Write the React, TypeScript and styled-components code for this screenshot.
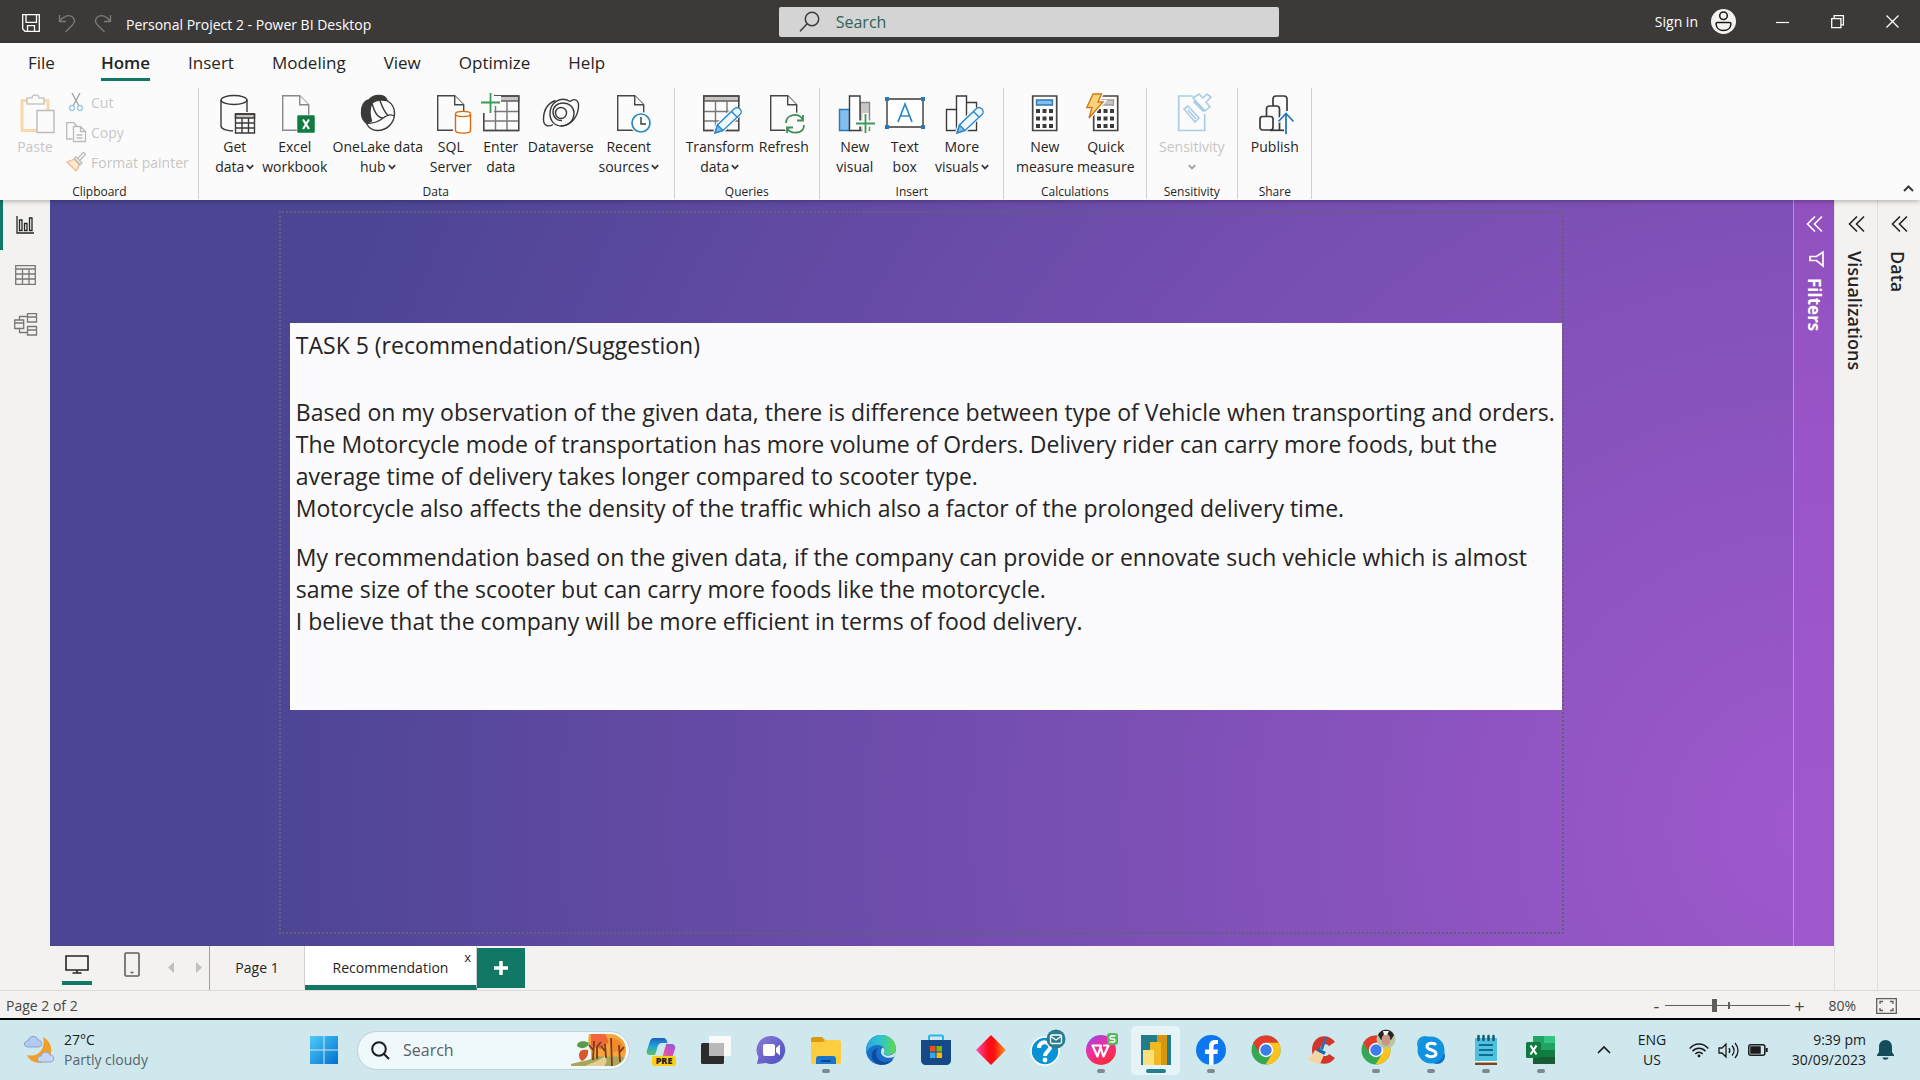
import React from "react";
import styled, { createGlobalStyle, css } from "styled-components";

const ink = "#3b3a39";
const green = "#117865";

const GlobalStyle = createGlobalStyle`
  *, *::before, *::after { box-sizing: border-box; }
  html, body { margin: 0; }
  body {
    font-family: "Open Sans", "Noto Sans", sans-serif;
    color: #252423;
    background: #f3f2f1;
  }
  button, input { font: inherit; color: inherit; }
  button { border: 0; padding: 0; background: none; white-space: nowrap; }
  svg { display: block; overflow: visible; flex: none; }
  p { margin: 0; }
`;

const Shell = styled.div`
  display: flex;
  flex-direction: column;
  height: 100vh;
  overflow: hidden;
`;

/* ---------- Title bar ---------- */
const TitleBar = styled.header`
  display: grid;
  grid-template-columns: 17fr 500px 14fr;
  align-items: center;
  height: 43px;
  flex: none;
  background: #3b3a38;
  color: #fff;
  font-size: 14px;
`;
const TitleLeft = styled.div`
  display: flex;
  align-items: center;
  padding: 2px 0 0 22px;
  gap: 18px;
`;
const TitleText = styled.span`
  padding-top: 4px;
  margin-left: -4px;
  white-space: nowrap;
`;
const TitleSearch = styled.label`
  display: flex;
  align-items: center;
  gap: 14px;
  height: 30px;
  padding-left: 20px;
  border-radius: 2px;
  background: #d4d4d4;
`;
const TitleInput = styled.input`
  flex: 1;
  min-width: 0;
  border: 0;
  outline: 0;
  background: none;
  font-size: 16px;
  &::placeholder { color: #2f6256; opacity: 1; }
`;
const TitleRight = styled.div`
  display: flex;
  justify-content: flex-end;
  align-items: center;
`;
const SignIn = styled.button`
  display: flex;
  align-items: center;
  gap: 13px;
  margin-right: 19px;
`;
const WindowButton = styled.button`
  display: grid;
  place-items: center;
  width: 55px;
  height: 43px;
`;

/* ---------- Ribbon ---------- */
const Ribbon = styled.section`
  display: flex;
  flex-direction: column;
  height: 157px;
  flex: none;
  background: #fbfbfb;
  box-shadow: 0 1px 5px rgba(0, 0, 0, 0.3);
  z-index: 1;
`;
const RibbonTabs = styled.nav`
  display: flex;
  gap: 38px;
  padding: 6px 0 0 28px;
`;
const RibbonTab = styled.button<{ $active?: boolean }>`
  height: 32px;
  margin-left: ${(p) => (p.$active ? 8 : 0)}px;
  padding-bottom: 2px;
  font-size: 17px;
  line-height: 26px;
  border-bottom: 3px solid ${(p) => (p.$active ? green : "transparent")};
  font-weight: ${(p) => (p.$active ? 600 : 400)};
`;
const RibbonBody = styled.div`
  display: flex;
  flex: 1;
  padding-top: 7px;
`;
const Group = styled.section<{ $pad: string }>`
  display: flex;
  flex-direction: column;
  justify-content: space-between;
  height: 111px;
  padding: ${(p) => p.$pad};
  border-right: 1px solid #d2d0ce;
`;
const GroupRow = styled.div`
  display: flex;
`;
const GroupName = styled.span`
  font-size: 12px;
  line-height: 15px;
  text-align: center;
`;
const Tool = styled.button<{ $w: number }>`
  display: flex;
  flex-direction: column;
  align-items: center;
  justify-content: flex-start;
  width: ${(p) => p.$w}px;
  padding-top: 4px;
  font-size: 14px;
  line-height: 20px;
  &:disabled { color: #c8c6c4; }
`;
const ToolText = styled.span`
  display: flex;
  flex-direction: column;
  align-items: center;
  padding-top: 3px;
`;
const ToolLine = styled.span`
  display: flex;
  align-items: center;
  gap: 2px;
`;
const ChevronSlot = styled.span`
  display: flex;
  align-items: center;
  height: 20px;
`;
const SmallTools = styled.div`
  display: flex;
  flex-direction: column;
  gap: 2px;
  padding-left: 6px;
`;
const SmallTool = styled.button`
  display: flex;
  align-items: center;
  gap: 5px;
  height: 28px;
  font-size: 14px;
  &:disabled { color: #c8c6c4; }
`;
const CollapseRibbon = styled.button`
  align-self: flex-end;
  margin-left: auto;
  padding: 8px 6px;
`;

/* ---------- Work area ---------- */
const Work = styled.main`
  display: flex;
  flex: 1;
  min-height: 0;
`;
const Stage = styled.div`
  display: flex;
  flex-direction: column;
  flex: 1;
  min-width: 0;
`;
const StageTop = styled.div`
  display: flex;
  flex: 1;
  min-height: 0;
`;
const ViewRail = styled.nav`
  display: flex;
  flex-direction: column;
  width: 50px;
  flex: none;
`;
const ViewButton = styled.button<{ $active?: boolean }>`
  display: grid;
  place-items: center;
  height: 50px;
  padding-right: 3px;
  padding-bottom: 1px;
  border-left: 3px solid ${(p) => (p.$active ? green : "transparent")};
`;
const Backdrop = styled.div`
  display: flex;
  flex: 1;
  min-width: 0;
  background: radial-gradient(ellipse 88% 208% at 99% 84%, #a058ce 0%, #4c4594 100%);
`;
const Canvas = styled.div`
  display: flex;
  justify-content: center;
  align-items: flex-start;
  flex: 1;
  min-width: 0;
  padding-top: 11px;
`;
const ReportPage = styled.article`
  height: calc(100% - 12px);
  aspect-ratio: 16 / 9;
  padding: 110px 0 0 9px;
  border: 2px dotted #625f78;
`;
const TextVisual = styled.section`
  height: 387px;
  padding: 6px;
  background: #fbfafd;
  font-size: 23px;
  line-height: 32px;
  color: #252423;
  white-space: nowrap;
`;
const Heading = styled.p`
  padding-bottom: 35px;
`;
const Paragraph = styled.p`
  padding-bottom: 17px;
`;
const sidePane = css`
  display: flex;
  flex-direction: column;
  align-items: center;
  flex: none;
  padding-top: 16px;
`;
const FiltersPane = styled.aside`
  ${sidePane}
  width: 41px;
  border-left: 1px solid #b394d6;
  background: linear-gradient(#9051bd, #9b55cb 40%, #a058ce);
  color: #fff;
`;
const SidePane = styled.aside`
  ${sidePane}
  width: 43px;
  border-left: 1px solid #e1dfdd;
`;
const PaneTitle = styled.span<{ $strong?: boolean }>`
  writing-mode: vertical-rl;
  padding-top: ${(p) => (p.$strong ? 11 : 19)}px;
  padding-right: ${(p) => (p.$strong ? 0 : 3)}px;
  font-size: ${(p) => (p.$strong ? 17 : 18)}px;
  line-height: 22px;
  font-weight: ${(p) => (p.$strong ? 700 : 600)};
`;
const FilterGlyph = styled.span`
  padding: 19px 0 0 4px;
`;

/* ---------- Page tabs and status ---------- */
const PageBar = styled.nav`
  display: flex;
  height: 44px;
  flex: none;
  padding-left: 50px;
`;
const LayoutTools = styled.div`
  display: flex;
  align-items: flex-start;
  width: 160px;
  padding-left: 12px;
  border-right: 1px solid #a19f9d;
`;
const LayoutButton = styled.button<{ $active?: boolean }>`
  display: grid;
  place-items: center;
  width: 30px;
  height: 39px;
  margin-right: 25px;
  padding-top: 2px;
  border-bottom: 4px solid ${(p) => (p.$active ? green : "transparent")};
`;
const PageArrows = styled.div`
  display: flex;
  gap: 22px;
  margin-left: -4px;
`;
const PageArrow = styled.button`
  display: grid;
  place-items: center;
  height: 43px;
`;
const PageTab = styled.button<{ $active?: boolean }>`
  display: grid;
  grid-template-columns: 1fr auto 1fr;
  align-items: center;
  padding: 0 5px;
  width: ${(p) => (p.$active ? 172 : 95)}px;
  font-size: 14px;
  border-right: 1px solid #d2d0ce;
  border-bottom: 5px solid ${(p) => (p.$active ? green : "transparent")};
  background: ${(p) => (p.$active ? "#fff" : "none")};
`;
const TabLabel = styled.span`
  grid-column: 2;
  padding-top: 4px;
`;
const TabClose = styled.span`
  justify-self: end;
  align-self: start;
  padding-top: 2px;
  font-size: 13px;
`;
const AddPage = styled.button`
  display: grid;
  place-items: center;
  width: 48px;
  height: 40px;
  margin-top: 2px;
  background: ${green};
`;
const StatusBar = styled.footer`
  display: flex;
  align-items: center;
  height: 30px;
  flex: none;
  padding: 2px 23px 0 6px;
  border-top: 1px solid #dddbd9;
  border-bottom: 2px solid #000;
  font-size: 14px;
  color: #484644;
`;
const ZoomBox = styled.div`
  display: flex;
  align-items: center;
  margin-left: auto;
`;
const ZoomStep = styled.button`
  width: 18px;
  font-size: 18px;
  line-height: 20px;
`;
const ZoomTrack = styled.input`
  width: 125px;
  height: 20px;
  margin: 0;
  appearance: none;
  background:
    linear-gradient(#605e5c, #605e5c) 63px 50% / 2px 7px no-repeat,
    linear-gradient(#605e5c, #605e5c) 0 50% / 100% 1px no-repeat;
  &::-webkit-slider-thumb {
    appearance: none;
    width: 5px;
    height: 13px;
    background: #605e5c;
  }
`;
const ZoomValue = styled.span`
  padding: 0 20px;
`;

/* ---------- Taskbar ---------- */
const Taskbar = styled.footer`
  display: flex;
  align-items: center;
  height: 60px;
  flex: none;
  background: #cfe8ee;
  color: #1b1b1b;
`;
const Weather = styled.button`
  display: flex;
  align-items: center;
  gap: 9px;
  width: 302px;
  padding-left: 24px;
  font-size: 14px;
  line-height: 20px;
  text-align: left;
`;
const Muted = styled.span`
  display: block;
  color: #566468;
`;
const StartButton = styled.button`
  display: grid;
  place-items: center;
  width: 44px;
  height: 48px;
`;
const TaskSearch = styled.label`
  display: flex;
  align-items: center;
  width: 273px;
  height: 39px;
  margin: 0 3px 0 11px;
  padding: 0 2px 0 13px;
  gap: 11px;
  border-radius: 20px;
  border: 1px solid #bcd3d9;
  background: #eff8fb;
`;
const TaskInput = styled.input`
  flex: 1;
  min-width: 0;
  border: 0;
  outline: 0;
  background: none;
  font-size: 16px;
  &::placeholder { color: #5a5f61; opacity: 1; }
`;
const AppButton = styled.button<{ $current?: boolean }>`
  display: flex;
  flex-direction: column;
  align-items: center;
  justify-content: flex-end;
  width: 49px;
  height: 49px;
  margin: 0 3px;
  padding-bottom: 2px;
  border-radius: 5px;
  background: ${(p) => (p.$current ? "#e6f4f7" : "none")};
`;
const Running = styled.span<{ $state: number }>`
  width: ${(p) => (p.$state === 2 ? 20 : 8)}px;
  height: 4px;
  margin-top: 3px;
  border-radius: 2px;
  background: ${(p) => (p.$state === 2 ? "#23808f" : p.$state ? "#7d898c" : "transparent")};
`;
const Tray = styled.div`
  display: flex;
  align-items: center;
  margin-left: auto;
  padding-right: 26px;
  font-size: 14px;
  line-height: 20px;
`;
const TrayLanguage = styled.button`
  width: 44px;
  margin: 0 15px 0 19px;
  text-align: center;
`;
const TrayIcons = styled.button`
  display: flex;
  align-items: center;
  gap: 9px;
`;
const Clock = styled.button`
  width: 98px;
  margin-right: 11px;
  text-align: right;
`;

/* ---------- Ribbon drawings ---------- */
const Icon = ({ children }: { children: React.ReactNode }) => (
  <svg width="40" height="42" viewBox="0 0 40 42" fill="none" stroke={ink} strokeWidth="1.4" aria-hidden="true">
    {children}
  </svg>
);
const Sheet = ({ x = 6, color = "#605e5c" }: { x?: number; color?: string }) => (
  <g transform={`translate(${x} 0)`} stroke={color} fill="#fbfbfb">
    <path d="M.7 3.7h17l9 9v25.600H.7z" />
    <path d="M17.700 3.700v9h9" />
  </g>
);
const Pencil = () => (
  <g stroke="#2b88c8">
    <path d="M33.500 17.500l-16 15.500-2.500 8 8-2.500L39 22.500z" stroke="#fbfbfb" strokeWidth="4" />
    <path d="M34 17c2-2 4.500-1.500 6 0s1.500 4 0 5.500L23 38.500l-8 2.500 2.500-8z" fill="#eef7fd" />
    <path d="M17.500 33l5.500 5.500-8 2.500z" fill="#83beec" />
    <path d="M31.500 19.500l5.500 5.500" />
  </g>
);
const Grid = ({ x = 2 }: { x?: number }) => (
  <g transform={`translate(${x} 0)`}>
    <path d="M.7 4h35v5h-35z" fill="#c8c6c4" stroke="#605e5c" />
    <path d="M.7 4h35v34.500h-35zM.7 19.500h35M.7 29h35M12.500 9v29.500M24 9v29.500" stroke="#797775" />
    <path d="M.7 4h35v34.500h-35z" stroke="#484644" />
  </g>
);
const CalcKeys = () => (
  <g fill={ink} stroke="none">
    {[17, 24.5, 32].map((y) => [11, 17.5, 24].map((x) => <rect key={`${x}-${y}`} x={x} y={y} width="4" height="4" />))}
  </g>
);
const Chevron = ({ color = ink }: { color?: string }) => (
  <svg width="8" height="6" viewBox="0 0 8 6" fill="none" stroke={color} strokeWidth="1.8" aria-hidden="true">
    <path d="M.8 1.200L4 4.400l3.200-3.200" />
  </svg>
);

const icons: Record<string, React.ReactNode> = {
  paste: (
    <Icon>
      <path d="M7 8.500h26v30H7z" stroke="#f8d9ae" strokeWidth="3" />
      <path d="M12 9V6h5c0-4 7-4 7 0h5v6H12z" fill="#fbfbfb" stroke="#c8c6c4" />
      <path d="M22 18.500h17v22H22z" fill="#fbfbfb" stroke="#bdbbb9" />
    </Icon>
  ),
  get: (
    <Icon>
      <path d="M6 8v26c0 3 6 5 13 5s13-2 13-5V8" />
      <ellipse cx="19" cy="8" rx="13" ry="4.5" />
      <path d="M18 20h24v23H18z" fill="#fbfbfb" stroke="none" />
      <path d="M20.500 22h19v4h-19z" fill="#c8c6c4" />
      <path d="M20.500 22h19v19h-19zM20.500 31h19M20.500 36h19M27 26v15M33.500 26v15" />
    </Icon>
  ),
  excel: (
    <Icon>
      <Sheet x={7} color="#8a8886" />
      <rect x="22" y="23" width="18" height="18" rx="1.5" fill="#107c41" stroke="#fbfbfb" strokeWidth=".5" />
      <path d="M28 27.500l6 9.500M34 27.500L28 37" stroke="#fff" strokeWidth="2.2" />
    </Icon>
  ),
  onelake: (
    <Icon>
      <path d="M11 8c2-3 6-4.500 10-4.500 4 0 7 2 8 5-5-1-11-1-16 3z" fill={ink} />
      <path d="M11 8c-5 1-8 6-7.500 13 0 4 2 8 5 10 1-1 4-1 5-2-2-6-2-12 0-17z" fill={ink} />
      <path d="M29 8.500c5 3 8 8 7.500 14-.5 9-8 16-17 16-5 0-9-3-11-7 6 0 11-1 16-5 4-3 9-5 12-2M14 11c2 8 6 15 11 15M22 8.500c2 6 5 12 8 15" />
    </Icon>
  ),
  sql: (
    <Icon>
      <Sheet x={6} color="#484644" />
      <path d="M22 19h19v23H22z" fill="#fbfbfb" stroke="none" />
      <path d="M24.500 22v16.500c0 3.500 15 3.500 15 0V22" fill="#fff" stroke="#d8690e" />
      <ellipse cx="32" cy="22" rx="7.5" ry="2.6" fill="#fff" stroke="#d8690e" />
    </Icon>
  ),
  enter: (
    <Icon>
      <Grid />
      <path d="M0 0h13v4h7v10h-7v7H0z" fill="#fbfbfb" stroke="none" />
      <path d="M9.500 1v20M0 10.500h19" stroke="#3a9a56" strokeWidth="1.8" />
    </Icon>
  ),
  dataverse: (
    <Icon>
      <circle cx="20" cy="21" r="5.5" />
      <path d="M29 9.500C20 4 9 10 9 22c0 7 5 12 11 12 8 0 13-6 13-13 0-6-5-10-10.500-10C16 11 12 15 12 20c0 6 5 9 9 8.500" />
      <path d="M29 9.500c5-4 9-1 8.500 5-.5 10-7 19-17.500 19.500M12 32.500c-5 3-9.500 1-9.500-5 0-9 4-16 12-19" />
    </Icon>
  ),
  recent: (
    <Icon>
      <Sheet x={8} color="#484644" />
      <circle cx="32" cy="31" r="11" fill="#fbfbfb" stroke="none" />
      <circle cx="32" cy="31" r="9" fill="#fff" stroke="#2b88c8" strokeWidth="1.7" />
      <path d="M32 25v7h5" />
    </Icon>
  ),
  transform: (
    <Icon>
      <Grid x={3} />
      <Pencil />
    </Icon>
  ),
  refresh: (
    <Icon>
      <Sheet x={6} color="#484644" />
      <circle cx="31" cy="32" r="11.5" fill="#fbfbfb" stroke="none" />
      <path d="M22 31c0-9 13-11 17-3M39 23v5.500h-6M40 33c0 9-13 10-17 3M23 41v-5.500h6" stroke="#3f8f55" strokeWidth="1.8" />
    </Icon>
  ),
  visual: (
    <Icon>
      <path d="M4.500 17.500h10v21h-10z" fill="#83beec" stroke="#2b78b8" />
      <path d="M25 10.500h9.500v28H25z" fill="#c8c6c4" stroke="#8a8886" />
      <path d="M14.500 4h10.500v34.500H14.500z" fill="#fff" />
      <path d="M27.500 21h6v7.500h8v6h-8v8h-6v-8h-7v-6h7z" fill="#fbfbfb" stroke="none" />
      <path d="M30.500 22v19M21 31.500h19" stroke="#3a9a56" strokeWidth="1.8" />
    </Icon>
  ),
  text: (
    <Icon>
      <path d="M2 7h36v28H2z" fill="#fff" />
      <path d="M13 30l7-18 7 18M15.500 24h9" stroke="#2b88c8" strokeWidth="1.7" />
      <g fill="#2b78b8" stroke="none">
        <path d="M0 5h4v4H0zM36 5h4v4h-4zM0 33h4v4H0zM36 33h4v4h-4z" />
      </g>
    </Icon>
  ),
  more: (
    <Icon>
      <path d="M4.500 17.500h10v21h-10zM14.500 4h10v34.500h-10zM24.500 10.500h10v28h-10z" fill="#fff" />
      <Pencil />
    </Icon>
  ),
  measure: (
    <Icon>
      <path d="M7.700 4h24v34.500h-24z" fill="#fff" stroke="#484644" strokeWidth="1.7" />
      <path d="M11.500 8h16v5h-16z" fill="#83beec" stroke="#2b78b8" />
      <CalcKeys />
    </Icon>
  ),
  quick: (
    <Icon>
      <path d="M7.700 4h24v34.500h-24z" fill="#fff" stroke="#484644" strokeWidth="1.7" />
      <path d="M11.500 8h16v5h-16z" fill="#c8c6c4" stroke="#a19f9d" />
      <CalcKeys />
      <path d="M7 2h8.500l-3.500 8h5L3 26l3-10.500H.8z" stroke="#fbfbfb" strokeWidth="4" />
      <path d="M7 2h8.500l-3.500 8h5L3 26l3-10.500H.8z" fill="#fdd37a" stroke="#cf7a17" />
    </Icon>
  ),
  sensitivity: (
    <Icon>
      <path d="M6.700 4h26v34.500h-26z" stroke="#a9cde4" strokeWidth="1.7" />
      <path d="M19 0h23v22H30z" fill="#fbfbfb" stroke="none" />
      <g stroke="#a9cde4" strokeWidth="1.6">
        <path d="M21 6l12 13 5-4-4-5 5-5-4-3-4 4-4-4z" />
        <path d="M22 9l10 10" strokeWidth="3" />
        <path d="M12 17l4-3 11 12-4 4zM16 18l8 9" />
      </g>
    </Icon>
  ),
  publish: (
    <Icon>
      <g strokeWidth="1.7">
        <path d="M18 14V7c0-2 1-3 3-3h8c2 0 3 1 3 3v12M11.500 24v-7c0-2 1-3 3-3h7c2 0 3 1 3 3v21" />
        <rect x="5" y="24.5" width="13" height="13.5" rx="2.5" />
        <path d="M15 38.300h14" />
      </g>
      <path d="M31 42V22M23 29.500l8-8 8 8" stroke="#fbfbfb" strokeWidth="4" />
      <path d="M31 42V22M23.500 29.500l7.500-8 7.500 8" stroke="#2b78b8" strokeWidth="1.8" />
    </Icon>
  ),
};

type ToolSpec = { icon: string; w: number; lines: string[]; menu?: boolean; off?: boolean };
const groups: { name: string; pad: string; tools: ToolSpec[] }[] = [
  {
    name: "Data",
    pad: "0 11px 0 10px",
    tools: [
      { icon: "get", w: 52, lines: ["Get", "data"], menu: true },
      { icon: "excel", w: 68, lines: ["Excel", "workbook"] },
      { icon: "onelake", w: 98, lines: ["OneLake data", "hub"], menu: true },
      { icon: "sql", w: 48, lines: ["SQL", "Server"] },
      { icon: "enter", w: 52, lines: ["Enter", "data"] },
      { icon: "dataverse", w: 68, lines: ["Dataverse"] },
      { icon: "recent", w: 68, lines: ["Recent", "sources"], menu: true },
    ],
  },
  {
    name: "Queries",
    pad: "0 8px",
    tools: [
      { icon: "transform", w: 74, lines: ["Transform", "data"], menu: true },
      { icon: "refresh", w: 54, lines: ["Refresh"] },
    ],
  },
  {
    name: "Insert",
    pad: "0 9px 0 10px",
    tools: [
      { icon: "visual", w: 50, lines: ["New", "visual"] },
      { icon: "text", w: 50, lines: ["Text", "box"] },
      { icon: "more", w: 64, lines: ["More", "visuals"], menu: true },
    ],
  },
  {
    name: "Calculations",
    pad: "0 10px",
    tools: [
      { icon: "measure", w: 62, lines: ["New", "measure"] },
      { icon: "quick", w: 60, lines: ["Quick", "measure"] },
    ],
  },
  {
    name: "Sensitivity",
    pad: "0 9px",
    tools: [{ icon: "sensitivity", w: 72, lines: ["Sensitivity", ""], menu: true, off: true }],
  },
  { name: "Share", pad: "0 6px 0 7px", tools: [{ icon: "publish", w: 60, lines: ["Publish"] }] },
];

const RibbonTool = ({ icon, w, lines, menu, off }: ToolSpec) => (
  <Tool $w={w} disabled={off}>
    {icons[icon]}
    <ToolText>
      {lines.map((line, i) => (
        <ToolLine key={i}>
          {line}
          {menu && i === lines.length - 1 && (
            <ChevronSlot>
              <Chevron color={off ? "#a19f9d" : ink} />
            </ChevronSlot>
          )}
        </ToolLine>
      ))}
    </ToolText>
  </Tool>
);

const DoubleChevron = () => (
  <svg width="17" height="16" viewBox="0 0 17 16" fill="none" stroke="currentColor" strokeWidth="1.6" aria-hidden="true">
    <path d="M9 .5L1.500 8 9 15.500M16 .5L8.500 8l7.500 7.500" />
  </svg>
);

/* ---------- Taskbar drawings ---------- */
const AppIcon = ({ children }: { children: React.ReactNode }) => (
  <svg width="32" height="32" viewBox="0 0 32 32" aria-hidden="true">
    {children}
  </svg>
);
const ChromeMark = () => (
  <g>
    <circle cx="16" cy="16" r="14.5" fill="#34a853" />
    <path d="M3.400 8.800A14.500 14.500 0 0 1 28.600 8.800H16L9.700 19.600z" fill="#e33b2e" />
    <path d="M28.600 8.800A14.500 14.500 0 0 1 15.500 30.500L22.300 19.600 16 8.800z" fill="#fcc31e" />
    <circle cx="16" cy="16" r="7.2" fill="#fff" />
    <circle cx="16" cy="16" r="5.7" fill="#3b7ded" />
  </g>
);

const apps: { name: string; run: number; art: React.ReactNode }[] = [
  {
    name: "Copilot",
    run: 0,
    art: (
      <>
        <defs>
          <linearGradient id="cpA" x1="0" y1="0" x2="0" y2="1"><stop stopColor="#1a5fc4" /><stop offset=".5" stopColor="#22a6d8" /><stop offset="1" stopColor="#67c34c" /></linearGradient>
          <linearGradient id="cpB" x1="1" y1="0" x2="0" y2="1"><stop stopColor="#8a5be8" /><stop offset=".5" stopColor="#d94fb4" /><stop offset="1" stopColor="#ff8a4a" /></linearGradient>
        </defs>
        <path d="M9 4h9c3 0 4 2 4.500 5H17c-3 0-4 2-5 6l-2 6H5c-3 0-4-2-3-5l3-9c.7-2 2-3 4-3z" fill="url(#cpA)" />
        <path d="M21 10h5c3 0 5 2 4 5l-2 6c-1 4-3 5-6 5h-8c3 0 3-2 4-5l2-7c.5-2 1-3 1-4z" fill="url(#cpB)" />
        <rect x="7" y="22" width="24" height="10" rx="2" fill="#fbcf14" />
        <text x="19" y="30" textAnchor="middle" fontSize="9" fontWeight="800" fill="#222">PRE</text>
      </>
    ),
  },
  {
    name: "Task view",
    run: 0,
    art: (
      <>
        <rect x="1" y="9" width="23" height="21" rx="1.5" fill="#2c2c2c" />
        <rect x="9" y="2" width="22" height="20" rx="1.5" fill="#fafafa" />
        <path d="M9 9h15v13H9z" fill="#b9b9b9" />
      </>
    ),
  },
  {
    name: "Chat",
    run: 0,
    art: (
      <>
        <defs><linearGradient id="chat" x1="0" y1="0" x2="1" y2="1"><stop stopColor="#8c7ad8" /><stop offset="1" stopColor="#4b4fc0" /></linearGradient></defs>
        <path d="M16 2a14 14 0 1 1-5 27L2 30l1.500-7A14 14 0 0 1 16 2z" fill="url(#chat)" />
        <rect x="8" y="10" width="12" height="12" rx="2" fill="#fff" />
        <path d="M21 14l4-3.500v11L21 18z" fill="#fff" />
      </>
    ),
  },
  {
    name: "File Explorer",
    run: 1,
    art: (
      <>
        <path d="M1 5c0-1 1-2 2-2h9l3 3v6H1z" fill="#d99a12" />
        <path d="M1 8h12l2-2h14c1 0 2 1 2 2v20c0 1-1 2-2 2H3c-1 0-2-1-2-2z" fill="#fcce3f" />
        <path d="M6 30v-5c0-2 1-3 3-3h14c2 0 3 1 3 3v5z" fill="#1976cc" />
        <rect x="11" y="26" width="10" height="2" rx="1" fill="#0a4a8c" />
      </>
    ),
  },
  {
    name: "Edge",
    run: 0,
    art: (
      <>
        <defs><linearGradient id="edge" x1="0" x2="1"><stop stopColor="#28a8e4" /><stop offset=".5" stopColor="#2fc6c8" /><stop offset="1" stopColor="#62d84c" /></linearGradient></defs>
        <circle cx="16" cy="16" r="15" fill="#1a6fc6" />
        <path d="M1.500 14C3 5 9 1 16 1c9 0 15 6 15 13 0 5-4 7-8 7-3 0-5-1-4-3 2-3-1-7-6-7-6 0-10 3-11.500 8z" fill="url(#edge)" />
        <path d="M13 14c-4 4-2 13 6 14 4 .5 8-1 10-4-4 8-14 8-18 5-7-5-5-13 2-15z" fill="#0f4a9c" />
        <path d="M19 18c-1 2 1 3.500 4 3.500 3 0 6-1 8-5 0 3-1 5-2 6.500-4 1.500-9 1-12-2-1.500-2-1.500-5 .5-7.500 2 1 2.500 3 1.500 4.500z" fill="#cfe8ee" />
      </>
    ),
  },
  {
    name: "Store",
    run: 0,
    art: (
      <>
        <path d="M9 8V3c0-1 .5-1.500 1.500-1.500h11C22.500 1.500 23 2 23 3v5" fill="none" stroke="#29b6f0" strokeWidth="2" />
        <path d="M1 6h30v20c0 3-2 5-5 5H6c-3 0-5-2-5-5z" fill="#154a86" />
        <path d="M10 12h5.500v5.500H10z" fill="#f25022" />
        <path d="M16.500 12H22v5.500h-5.500z" fill="#7fba00" />
        <path d="M10 18.500h5.500V24H10z" fill="#2fa8f0" />
        <path d="M16.500 18.500H22V24h-5.500z" fill="#ffb900" />
      </>
    ),
  },
  {
    name: "Diamond",
    run: 0,
    art: (
      <>
        <defs><linearGradient id="dia"><stop stopColor="#ff4fb0" /><stop offset=".4" stopColor="#f80d1c" /><stop offset=".6" stopColor="#fa1010" /><stop offset="1" stopColor="#ff9a1c" /></linearGradient></defs>
        <path d="M16 1l15 15-15 15L1 16z" fill="url(#dia)" />
      </>
    ),
  },
  {
    name: "Help and mail",
    run: 0,
    art: (
      <>
        <circle cx="15" cy="17" r="14" fill="#0a93d4" stroke="#fff" strokeWidth="1.5" />
        <path d="M9 14c0-8 12-7 11 0-.5 3-5 4-5 8" fill="none" stroke="#fff" strokeWidth="4" />
        <circle cx="15" cy="26" r="2.4" fill="#fff" />
        <circle cx="26" cy="5" r="9.5" fill="#2a7d90" />
        <rect x="20.5" y="1" width="11" height="8.5" rx="1.5" fill="none" stroke="#fff" strokeWidth="1.3" />
        <path d="M21 2.500l5 3.500 5-3.500" fill="none" stroke="#fff" strokeWidth="1.3" />
      </>
    ),
  },
  {
    name: "WPS Office",
    run: 1,
    art: (
      <>
        <defs><linearGradient id="wps" x1="0" y1="0" x2=".6" y2="1"><stop stopColor="#8a4cf8" /><stop offset=".5" stopColor="#f02f9c" /><stop offset="1" stopColor="#fb2a3c" /></linearGradient></defs>
        <circle cx="16" cy="16" r="15" fill="url(#wps)" />
        <path d="M7.500 11.500h8.500l-3.500 11zM15.500 13.500l3 9 5-11H18" fill="none" stroke="#fff" strokeWidth="2.2" strokeLinejoin="round" />
        <rect x="22" y="-1" width="11" height="12" rx="3" fill="#55b85a" />
        <path d="M30.500 2h-4c-2 0-2 3 0 3h2c2 0 2 3 0 3h-4" fill="none" stroke="#fff" strokeWidth="1.4" />
      </>
    ),
  },
  {
    name: "Power BI Desktop",
    run: 2,
    art: (
      <>
        <path d="M1 1h30v30H1z" fill="#217c8c" />
        <path d="M17 1h10v30H17z" fill="#d8960f" />
        <path d="M10 8h11v23H10z" fill="#efb91f" />
        <path d="M3 16h11v15H3z" fill="#fbe07a" />
      </>
    ),
  },
  {
    name: "Facebook",
    run: 1,
    art: (
      <>
        <circle cx="16" cy="16" r="15" fill="#0c78f0" />
        <path d="M14 31V20h-4v-4.500h4V12c0-4 2.500-6 6-6h3v4h-2c-2 0-2.500 1-2.500 2.500v3h4.500l-.7 4.500h-3.800v11z" fill="#fff" />
      </>
    ),
  },
  { name: "Chrome", run: 0, art: <ChromeMark /> },
  {
    name: "CCleaner",
    run: 0,
    art: (
      <>
        <path d="M30 8l-6 4c-3-4-9-2-9 4s6 8 9 4l6 4c-7 10-23 7-23-8S23-2 30 8z" fill="#d3352b" />
        <path d="M20 3l2 1-4 12-3-1z" fill="#2b6fb0" />
        <path d="M13 14l8 4-2 3-8-4z" fill="#2468a8" />
        <path d="M10 16l9 5-4 9c-5 0-10-3-13-6 4-1 6-4 8-8z" fill="#f4d6a4" />
      </>
    ),
  },
  {
    name: "Chrome profile",
    run: 1,
    art: (
      <>
        <ChromeMark />
        <circle cx="26" cy="5" r="9.5" fill="#b9c6a4" />
        <path d="M18 1c3-7 13-7 16 0l-3 5H21z" fill="#262423" />
        <ellipse cx="26" cy="6" rx="4.5" ry="6" fill="#c99584" />
        <path d="M23-3l6 0-2 4h-3z" fill="#f2f2f2" />
      </>
    ),
  },
  {
    name: "Skype",
    run: 1,
    art: (
      <>
        <circle cx="10" cy="10" r="8" fill="#1c95dc" />
        <circle cx="22" cy="22" r="8" fill="#0a6fc8" />
        <circle cx="16" cy="16" r="13.5" fill="#0f93e0" />
        <path d="M21 11c-2-2.500-9-2.500-9 1.500s9 3 9 7-8 4-10 1" fill="none" stroke="#fff" strokeWidth="3" />
      </>
    ),
  },
  {
    name: "Notepad",
    run: 1,
    art: (
      <>
        <path d="M5 4h22v24H5z" fill="#4fc0e0" />
        <path d="M5 28h22v3H5z" fill="#7a4a1a" />
        <path d="M5 27h22v1.500H5z" fill="#fff" />
        <path d="M9 11h14M9 16h14M9 21h14" stroke="#0d6f90" strokeWidth="1.8" />
        <path d="M8.500 2v4M13.500 2v4M18.500 2v4M23.500 2v4" stroke="#14586e" strokeWidth="2.5" strokeLinecap="round" />
      </>
    ),
  },
  {
    name: "Excel",
    run: 1,
    art: (
      <>
        <path d="M8 2h11v14H8z" fill="#21a366" />
        <path d="M19 2h11v7H19z" fill="#33c481" />
        <path d="M19 9h11v7H19z" fill="#21a366" />
        <path d="M8 16h22v7H8z" fill="#107c41" />
        <path d="M8 23h22v7H8z" fill="#185c37" />
        <rect x="1" y="8" width="15" height="16" rx="1.5" fill="#117a40" />
        <path d="M5.500 11.500l6 9M11.500 11.500l-6 9" stroke="#fff" strokeWidth="2.2" />
      </>
    ),
  },
];

export default function App() {
  return (
    <>
      <GlobalStyle />
      <Shell>
        <TitleBar>
          <TitleLeft>
            <svg width="18" height="18" viewBox="0 0 18 18" fill="none" stroke="#fff" strokeWidth="1.3" aria-hidden="true">
              <path d="M.7.7h16.600v16.600H3L.7 15zM4 .7v7.600h10.500V.7M5.500 17v-5.300h7V17" />
            </svg>
            <svg width="18" height="18" viewBox="0 0 18 18" fill="none" stroke="#7d7b79" strokeWidth="1.3" aria-hidden="true">
              <path d="M1.500 1v6.500H8M1.500 7.500C5 2 11 0 14.500 3c3 3 2 6 0 8L7.500 18" />
            </svg>
            <svg width="18" height="18" viewBox="0 0 18 18" fill="none" stroke="#7d7b79" strokeWidth="1.3" aria-hidden="true">
              <path d="M16.500 1v6.500H10M16.500 7.500C13 2 7 0 3.500 3c-3 3-2 6 0 8l7 7" />
            </svg>
            <TitleText>Personal Project 2 - Power BI Desktop</TitleText>
          </TitleLeft>
          <TitleSearch>
            <svg width="21" height="21" viewBox="0 0 21 21" fill="none" stroke={ink} strokeWidth="1.5" aria-hidden="true">
              <circle cx="13" cy="8" r="6.7" />
              <path d="M8.200 12.800L1 20.200" />
            </svg>
            <TitleInput placeholder="Search" aria-label="Search" />
          </TitleSearch>
          <TitleRight>
            <SignIn>
              Sign in
              <svg width="25" height="25" viewBox="0 0 25 25" aria-hidden="true">
                <circle cx="12.5" cy="12.5" r="12.5" fill="#f3f2f1" />
                <g fill="none" stroke="#1b1a19" strokeWidth="1.5">
                  <circle cx="12.5" cy="6.8" r="3.8" />
                  <path d="M6.500 13.500h12c1 0 1.500.5 1.500 1.500-.5 4-3.500 6.500-7.500 6.500S5.500 19 5 15c0-1 .5-1.500 1.500-1.500z" />
                </g>
              </svg>
            </SignIn>
            <WindowButton aria-label="Minimize">
              <svg width="13" height="13" viewBox="0 0 13 13" stroke="#fff" strokeWidth="1.2"><path d="M0 7.500h13" /></svg>
            </WindowButton>
            <WindowButton aria-label="Restore">
              <svg width="13" height="13" viewBox="0 0 13 13" fill="none" stroke="#fff" strokeWidth="1.3"><path d="M.7 3.700h9.200v9H.7zM3.200 3.500V.7h9.200v9.200H10" /></svg>
            </WindowButton>
            <WindowButton aria-label="Close">
              <svg width="13" height="13" viewBox="0 0 13 13" stroke="#fff" strokeWidth="1.3"><path d="M.5.5l12 12M12.500.5l-12 12" /></svg>
            </WindowButton>
          </TitleRight>
        </TitleBar>

        <Ribbon>
          <RibbonTabs>
            {["File", "Home", "Insert", "Modeling", "View", "Optimize", "Help"].map((t) => (
              <RibbonTab key={t} $active={t === "Home"}>{t}</RibbonTab>
            ))}
          </RibbonTabs>
          <RibbonBody>
            <Group $pad="0 9px 0 10px">
              <GroupRow>
                <Tool $w={50} disabled>
                  {icons.paste}
                  <ToolText>Paste</ToolText>
                </Tool>
                <SmallTools>
                  <SmallTool disabled>
                    <svg width="20" height="20" viewBox="0 0 20 20" fill="none" stroke="#a19f9d" strokeWidth="1.3" aria-hidden="true">
                      <path d="M6 1l7 13M14 1L7 14" />
                      <circle cx="6" cy="16" r="2.5" stroke="#9cc8e6" /><circle cx="14" cy="16" r="2.5" stroke="#9cc8e6" />
                    </svg>
                    Cut
                  </SmallTool>
                  <SmallTool disabled>
                    <svg width="20" height="20" viewBox="0 0 20 20" fill="none" stroke="#bdbbb9" strokeWidth="1.3" aria-hidden="true">
                      <path d="M6.500 17H.7V.7h7l3 3M7.500 4.500h7l5 5v10h-12zM14.500 4.500v5h5M10.500 13h6M10.500 16h6" />
                    </svg>
                    Copy
                  </SmallTool>
                  <SmallTool disabled>
                    <svg width="20" height="20" viewBox="0 0 20 20" fill="none" stroke="#bdbbb9" strokeWidth="1.3" aria-hidden="true">
                      <path d="M1 10l8-3 5 5-4 7z" fill="#fde9cf" stroke="#f0b98a" />
                      <path d="M8 7l2-2 6 6-2 2zM12 6l5-5c1-1 3 1 2 2l-5 5" />
                    </svg>
                    Format painter
                  </SmallTool>
                </SmallTools>
              </GroupRow>
              <GroupName>Clipboard</GroupName>
            </Group>
            {groups.map((g) => (
              <Group key={g.name} $pad={g.pad}>
                <GroupRow>{g.tools.map((t) => <RibbonTool key={t.icon} {...t} />)}</GroupRow>
                <GroupName>{g.name}</GroupName>
              </Group>
            ))}
            <CollapseRibbon aria-label="Collapse ribbon">
              <svg width="11" height="7" viewBox="0 0 11 7" fill="none" stroke={ink} strokeWidth="2"><path d="M1 6l4.500-4.500L10 6" /></svg>
            </CollapseRibbon>
          </RibbonBody>
        </Ribbon>

        <Work>
          <Stage>
            <StageTop>
              <ViewRail>
                <ViewButton $active aria-label="Report view">
                  <svg width="18" height="18" viewBox="0 0 18 18" fill="none" stroke="#252423" strokeWidth="1.3">
                    <path d="M1 0v17h17M3.500 4h2.500v10.500H3.500zM8.500 7.500H11v7H8.500zM13.500 2H16v12.500h-2.500z" />
                  </svg>
                </ViewButton>
                <ViewButton aria-label="Table view">
                  <svg width="21" height="20" viewBox="0 0 21 20" fill="none" stroke="#797775" strokeWidth="1.3">
                    <path d="M.7.7h19.600v18.600H.7zM.7 4h19.600M.7 9h19.600M.7 14h19.600M7.500 4v15M14 4v15" />
                  </svg>
                </ViewButton>
                <ViewButton aria-label="Model view">
                  <svg width="23" height="23" viewBox="0 0 23 23" fill="none" stroke="#797775" strokeWidth="1.3">
                    <path d="M.7 7h9v8.500h-9zM.7 10h9M13.500.7h9V9h-9zM13.500 4h9M13.500 13.500h9V22h-9zM13.500 17h9M5.500 7V3.500h8M5.500 15.500v4h8" />
                  </svg>
                </ViewButton>
              </ViewRail>
              <Backdrop>
                <Canvas>
                  <ReportPage>
                    <TextVisual>
                      <Heading>TASK 5 (recommendation/Suggestion)</Heading>
                      <Paragraph>
                        Based on my observation of the given data, there is difference between type of Vehicle when transporting and orders.<br />
                        The Motorcycle mode of transportation has more volume of Orders. Delivery rider can carry more foods, but the<br />
                        average time of delivery takes longer compared to scooter type.<br />
                        Motorcycle also affects the density of the traffic which also a factor of the prolonged delivery time.
                      </Paragraph>
                      <Paragraph>
                        My recommendation based on the given data, if the company can provide or ennovate such vehicle which is almost<br />
                        same size of the scooter but can carry more foods like the motorcycle.<br />
                        I believe that the company will be more efficient in terms of food delivery.
                      </Paragraph>
                    </TextVisual>
                  </ReportPage>
                </Canvas>
                <FiltersPane>
                  <DoubleChevron />
                  <FilterGlyph>
                    <svg width="15" height="16" viewBox="0 0 15 16" fill="none" stroke="#fff" strokeWidth="1.7" aria-hidden="true">
                      <path d="M14 1v14L7.500 9.500H1v-4h6.500z" />
                    </svg>
                  </FilterGlyph>
                  <PaneTitle $strong>Filters</PaneTitle>
                </FiltersPane>
              </Backdrop>
            </StageTop>
            <PageBar>
              <LayoutTools>
                <LayoutButton $active aria-label="Desktop layout">
                  <svg width="24" height="19" viewBox="0 0 24 19" fill="none" stroke="#252423" strokeWidth="1.6">
                    <path d="M1 1h22v14H1zM12 15v3M7.500 18h9" />
                  </svg>
                </LayoutButton>
                <LayoutButton aria-label="Mobile layout">
                  <svg width="16" height="25" viewBox="0 0 16 25" fill="none" stroke="#605e5c" strokeWidth="1.6">
                    <rect x="1" y="1" width="14" height="23" rx="1" /><path d="M6.500 20.500h3" />
                  </svg>
                </LayoutButton>
                <PageArrows>
                  <PageArrow aria-label="Previous pages">
                    <svg width="6" height="11" viewBox="0 0 6 11" fill="#c2c0be"><path d="M6 0v11L0 5.500z" /></svg>
                  </PageArrow>
                  <PageArrow aria-label="Next pages">
                    <svg width="6" height="11" viewBox="0 0 6 11" fill="#c2c0be"><path d="M0 0v11l6-5.500z" /></svg>
                  </PageArrow>
                </PageArrows>
              </LayoutTools>
              <PageTab><TabLabel>Page 1</TabLabel></PageTab>
              <PageTab $active><TabLabel>Recommendation</TabLabel><TabClose>x</TabClose></PageTab>
              <AddPage aria-label="New page">
                <svg width="14" height="14" viewBox="0 0 14 14" stroke="#fff" strokeWidth="3.5"><path d="M7 0v14M0 7h14" /></svg>
              </AddPage>
            </PageBar>
          </Stage>
          <SidePane>
            <DoubleChevron />
            <PaneTitle>Visualizations</PaneTitle>
          </SidePane>
          <SidePane>
            <DoubleChevron />
            <PaneTitle>Data</PaneTitle>
          </SidePane>
        </Work>

        <StatusBar>
          Page 2 of 2
          <ZoomBox>
            <ZoomStep aria-label="Zoom out">-</ZoomStep>
            <ZoomTrack type="range" min="0" max="100" defaultValue="39" aria-label="Zoom" />
            <ZoomStep aria-label="Zoom in">+</ZoomStep>
            <ZoomValue>80%</ZoomValue>
            <svg width="21" height="16" viewBox="0 0 21 16" fill="none" stroke="#605e5c" strokeWidth="1.3" aria-hidden="true">
              <path d="M.7.7h19.600v14.600H.7zM4 6V3.500h3M14 3.500h3V6M17 10v2.500h-3M7 12.500H4V10" />
            </svg>
          </ZoomBox>
        </StatusBar>

        <Taskbar>
          <Weather>
            <svg width="31" height="30" viewBox="0 0 31 30" aria-hidden="true">
              <path d="M19 2c12 6 11 24-3 26-6 0-11-3-13-8 11 3 19-6 16-18z" fill="#f0a028" />
              <path d="M4 12c-5 0-5-6 0-6 1-6 9-6 10-1 5 0 5 7 0 7z" fill="#b4c9ee" stroke="#86a3d8" />
              <path d="M17 27c-5 0-5-6 0-6 1-5 8-5 9-1 5 0 5 7 0 7z" fill="#c4d6f4" stroke="#86a3d8" />
            </svg>
            <span>27°C<Muted>Partly cloudy</Muted></span>
          </Weather>
          <StartButton aria-label="Start">
            <svg width="30" height="30" viewBox="0 0 30 30">
              <defs><linearGradient id="win" x1="0" y1="0" x2="1" y2="1"><stop stopColor="#4fcbfa" /><stop offset="1" stopColor="#0070cf" /></linearGradient></defs>
              <path d="M1 1h13.500v13.500H1zM15.500 1H29v13.500H15.500zM1 15.500h13.500V29H1zM15.500 15.500H29V29H15.500z" fill="url(#win)" />
            </svg>
          </StartButton>
          <TaskSearch>
            <svg width="19" height="19" viewBox="0 0 19 19" fill="none" stroke="#1b1b1b" strokeWidth="2" aria-hidden="true">
              <circle cx="8" cy="8" r="6.8" /><path d="M13 13l5 5" />
            </svg>
            <TaskInput placeholder="Search" aria-label="Search the taskbar" />
            <svg width="56" height="34" viewBox="0 0 56 34" aria-hidden="true">
              <path d="M18 1h21c9 0 16 7 16 16 0 8-5 14-12 16H20V18c-3-5-3-12-2-17z" fill="#f7a53a" />
              <path d="M20 1h14l4 8-8 7-10-3z" fill="#f0683a" />
              <path d="M40 5c9 1 13 6 14 13l-12 1z" fill="#f28a2c" />
              <path d="M0 31c10-3 18-3 26-8l28 1c-2 5-7 9-14 9H0z" fill="#a9a65a" />
              <path d="M14 33c8-4 14-5 20-10 3 4 1 8-1 10z" fill="#e3cf94" />
              <path d="M6 13c0-5 7-6 12-3-1 5-8 7-12 3z" fill="#5a9a4a" />
              <path d="M8 22c0-5 4-6 9-5 1 5-2 9-6 11-2-1-3-3-3-6z" fill="#d9582c" />
              <path d="M22 27l1-19M26 26V14l4-5M35 25l-1-14M41 33l-1-28M49 29l-1-17M48 20l5-6M34 18l-4-5M23 18l-5-6" stroke="#7a3b1c" strokeWidth="1.8" fill="none" />
            </svg>
          </TaskSearch>
          {apps.map((a) => (
            <AppButton key={a.name} aria-label={a.name} $current={a.run === 2}>
              <AppIcon>{a.art}</AppIcon>
              <Running $state={a.run} />
            </AppButton>
          ))}
          <Tray>
            <svg width="14" height="8" viewBox="0 0 14 8" fill="none" stroke="#1b1b1b" strokeWidth="1.7" aria-hidden="true"><path d="M1 7l6-6 6 6" /></svg>
            <TrayLanguage>ENG<br />US</TrayLanguage>
            <TrayIcons aria-label="Network, volume and battery">
              <svg width="20" height="15" viewBox="0 0 20 15" fill="none" stroke="#1b1b1b" strokeWidth="1.4">
                <path d="M.7 5.500c5-6 13.600-6 18.600 0M3.500 8.300c3.500-4 9.500-4 13 0M6.300 11c2-2.400 5.400-2.400 7.400 0" />
                <circle cx="10" cy="13" r="1.4" fill="#1b1b1b" stroke="none" />
              </svg>
              <svg width="21" height="17" viewBox="0 0 21 17" fill="none" stroke="#1b1b1b" strokeWidth="1.3">
                <path d="M1 6h3l4-4v13l-4-4H1zM11 6c1 1.500 1 3.500 0 5M14 3.500c2.500 3 2.500 7 0 10M17 1c4 4.500 4 10.500 0 15" />
              </svg>
              <svg width="20" height="12" viewBox="0 0 20 12" fill="none" stroke="#1b1b1b" strokeWidth="1.5">
                <rect x=".8" y=".8" width="16" height="10.4" rx="2" /><path d="M3 3h9v6H3z" fill="#1b1b1b" /><path d="M18.700 4v4" strokeWidth="2" />
              </svg>
            </TrayIcons>
            <Clock>9:39 pm<br />30/09/2023</Clock>
            <svg width="17" height="20" viewBox="0 0 17 20" fill="#154c5c" aria-hidden="true">
              <path d="M8.500 0c4 0 6.500 3 6.500 7v5l2 3v1H0v-1l2-3V7c0-4 2.500-7 6.500-7zM5.500 17.500h6c-.5 3-5.500 3-6 0z" />
            </svg>
          </Tray>
        </Taskbar>
      </Shell>
    </>
  );
}
